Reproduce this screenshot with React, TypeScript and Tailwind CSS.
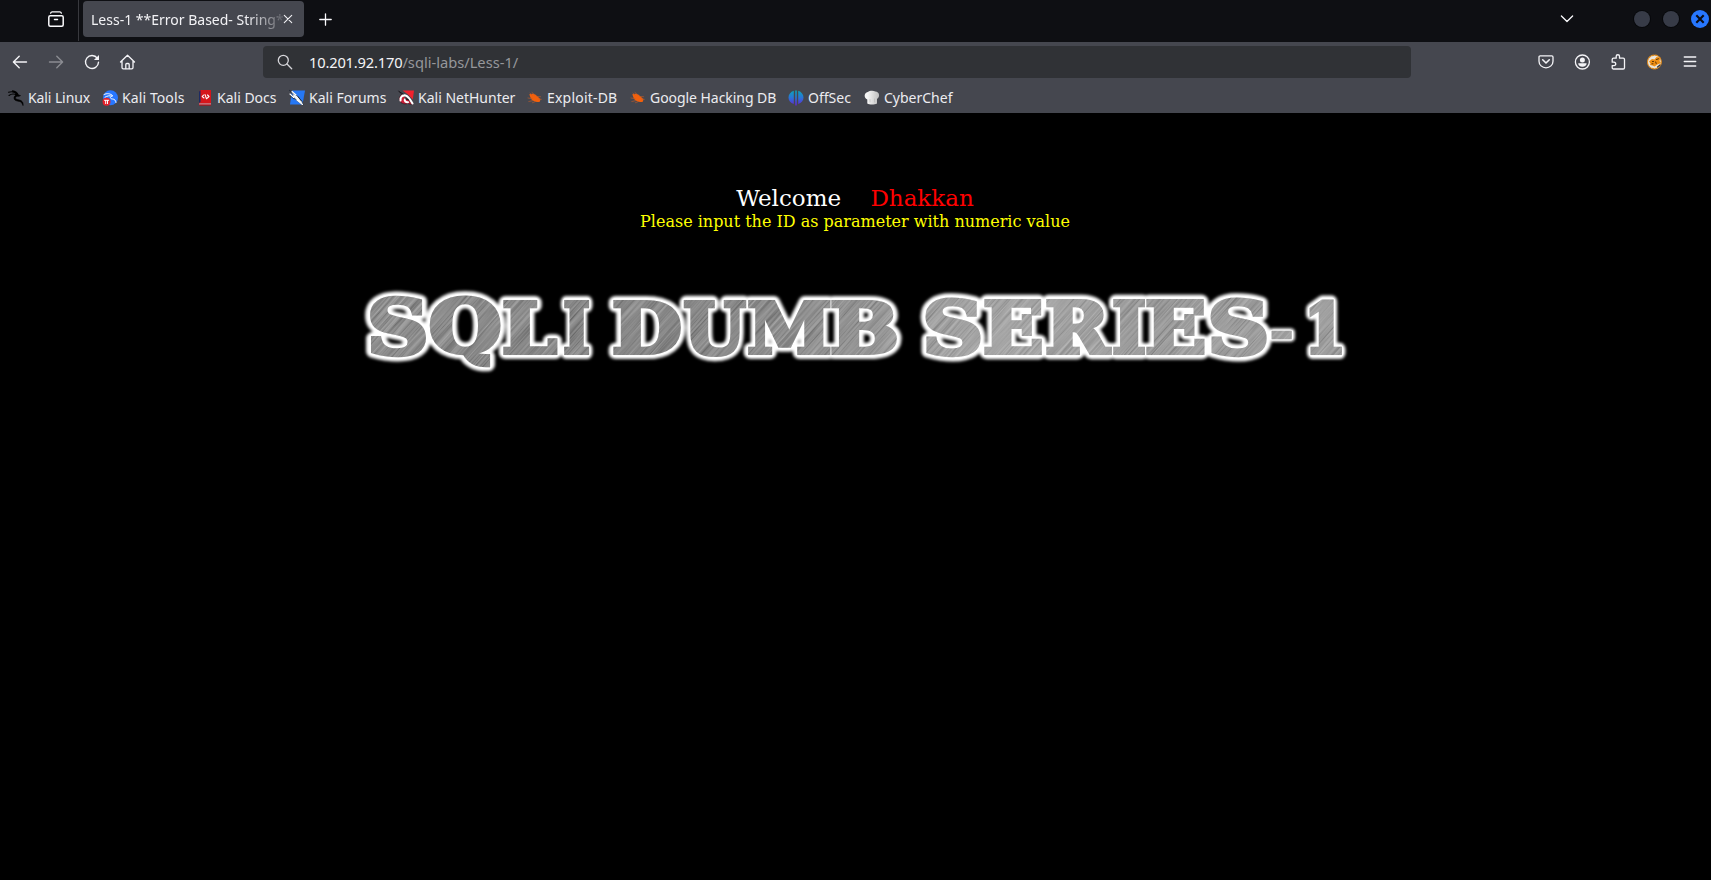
import React from "react";

type IconProps = { children: React.ReactNode; className?: string };

function Icon({ children, className = "" }: IconProps) {
  return (
    <svg
      viewBox="0 0 16 16"
      className={`size-4 shrink-0 overflow-visible ${className}`}
      fill="none"
      stroke="currentColor"
      strokeWidth={1.3}
      strokeLinecap="round"
      strokeLinejoin="round"
    >
      {children}
    </svg>
  );
}

function ToolButton({ children, className = "" }: IconProps) {
  return <button className={`flex size-9 items-center justify-center ${className}`}>{children}</button>;
}

function DragonIcon() {
  return (
    <Icon className="text-black">
      <path d="M.5 2.2C4 1.2 7.500 2.200 9.500 4.800M1 5.500C3.500 3.600 6.500 3.800 9 5.200M4.500 .8C7 1.200 9 2.500 10 4.500" strokeWidth={1.1} />
      <path d="M9 4.500L12.500 5.600L11 6.300C8 6 6.500 7.600 8 9C9.500 10 13 9.500 14.500 12C15.200 13.400 15.200 14.500 15 15.600C14.500 13.500 13.500 12 11.500 11.500C8.500 10.900 6 10.500 6 8C6 6.300 7.500 5.200 9 4.500Z" fill="currentColor" strokeWidth={0.6} />
    </Icon>
  );
}

function ToolsIcon() {
  return (
    <Icon>
      <circle cx="8.5" cy="7.700" r="7.500" fill="#2777ff" stroke="none" />
      <path d="M2 4.500C5 3 8.500 3.500 10.500 5.500M3 7.200C5.500 5.500 8 5.500 10 6.200M10 6C7.500 6.500 8 9 10.500 9C12.500 9 13.800 10.500 14 12.500" stroke="#fff" strokeWidth={1} />
      <circle cx="4.500" cy="11.700" r="4" fill="#e3222b" stroke="none" />
      <path d="M2.500 10.300H6.700M3.700 10.500V13.600M5.500 10.500V13.600" stroke="#fff" strokeWidth={1} />
    </Icon>
  );
}

function DocsIcon() {
  return (
    <Icon>
      <path d="M2 1.500L3.500 0H14V15H2Z" fill="#d5151b" stroke="none" />
      <path d="M2 1.500L3.500 .3V12L2 13Z" fill="#1c2c63" stroke="none" />
      <path d="M2.200 13.500H14V14.700H2.200Z" fill="#b9c1cf" stroke="none" />
      <path d="M2.200 14.500H14V15.600H2.200Z" fill="#b70d13" stroke="none" />
      <path d="M6.500 5.200L5.200 6.600L7 8M10.500 5L12 6.500L10.300 8.200M8 4.600L9.500 8.700" stroke="#fff" strokeWidth={1.1} />
    </Icon>
  );
}

function ForumsIcon() {
  return (
    <Icon>
      <path d="M3 .5H16L13.500 14.500H1Z" fill="#2678f5" stroke="none" />
      <path d="M.7 .6L4 4.500L3.600 6.500L8.500 11L14 15L13 11.500L8.500 6L6.500 4.800Z" fill="#f4f6f8" stroke="#16202e" strokeWidth={0.7} />
      <path d="M1 4L4.500 7.500M3 1.500L7 5M8 10L13.500 14.500" stroke="#fff" strokeWidth={1.1} />
      <path d="M1.500 6L5 9M9 6.800L12.500 11" stroke="#101820" strokeWidth={0.7} />
    </Icon>
  );
}

function NetHunterIcon() {
  return (
    <Icon>
      <path d="M4.500 .5H16L14.800 9.500L10 4.500Z" fill="#f0222e" stroke="none" />
      <path d="M.7 1L4 4.500C1.500 6 .8 8.500 1.500 10.500C3 13.500 6 14.500 9.500 13.500L14.500 14.500L11 10L8 8.500" fill="#c91f38" stroke="#22131a" strokeWidth={0.6} />
      <path d="M2.500 10.500C2 7 4.500 5 7.500 5.500C10.500 6.200 12 9 14.500 13.500M7 9C6 11 8 12.500 10 12.200" stroke="#fff" strokeWidth={2.100} />
      <path d="M1 1.500L5 4M7 8.600L10.500 10" stroke="#17191d" strokeWidth={1} />
    </Icon>
  );
}

function BugIcon() {
  return (
    <Icon className="text-[#f2600c]">
      <path d="M2.300 4.300C5 3 8 3.600 10 6L13.500 9.200L12.800 11.700C9 12.800 5.500 11 3.800 8.500Z" fill="currentColor" stroke="none" />
      <path d="M5 2.500L8 5M3 3.200L5 5M10 6.500L13.500 6.700M12 9L14.300 9.300M1 8L5 8.700M1.800 11.500L6 10.600M5.500 12.700L8.500 11.500" stroke="#b65a2c" strokeWidth={0.7} />
    </Icon>
  );
}

function OffSecIcon() {
  return (
    <Icon>
      <defs>
        <linearGradient id="offsec" x1="0" y1="0" x2="0" y2="1">
          <stop offset="0" stopColor="#0aa5b8" />
          <stop offset=".5" stopColor="#2b72d8" />
          <stop offset="1" stopColor="#6424d2" />
        </linearGradient>
      </defs>
      <path d="M5.800 .7V14C2.500 13 .5 10.500 .5 7.500S2.500 1.700 5.800 .7ZM7.200 .5H8.800V15.500H7.200ZM10.200 .7C13.500 1.700 15.500 4.500 15.500 7.500S13.500 13 10.200 14Z" fill="url(#offsec)" stroke="none" />
    </Icon>
  );
}

function ChefIcon() {
  return (
    <Icon>
      <defs>
        <linearGradient id="chef">
          <stop offset=".2" stopColor="#f4f4f4" />
          <stop offset="1" stopColor="#bdbdbd" />
        </linearGradient>
      </defs>
      <path d="M3.300 13.500V9.500C-.5 8 0 2.500 3.800 2C5.500 .5 9.500 .3 11.300 1.500C15.500 1.500 16.500 7 13 9V13.500C10.500 14.800 5.500 14.800 3.300 13.500Z" fill="url(#chef)" stroke="none" />
      <path d="M6 9.500V12M10.500 9V12" stroke="#b5b5b5" strokeWidth={0.6} />
    </Icon>
  );
}

const bookmarks: [string, () => React.ReactElement, string][] = [
  ["Kali Linux", DragonIcon, "w-[94px] tracking-[-0.1px]"],
  ["Kali Tools", ToolsIcon, "w-[95px] tracking-[0.1px]"],
  ["Kali Docs", DocsIcon, "w-[92px]"],
  ["Kali Forums", ForumsIcon, "w-[109px]"],
  ["Kali NetHunter", NetHunterIcon, "w-[129px]"],
  ["Exploit-DB", BugIcon, "w-[103px] tracking-[0.2px]"],
  ["Google Hacking DB", BugIcon, "w-[158px] tracking-[-0.05px]"],
  ["OffSec", OffSecIcon, "w-[76px]"],
  ["CyberChef", ChefIcon, "w-[90px]"],
];

function TabStrip() {
  return (
    <header className="flex h-[42px] items-start bg-[#0e0f13]">
      <div className="flex h-[41px] w-[79px] items-center justify-end border-r border-[#38393e] pr-[14px] text-[#fbfbfe]">
        <Icon className="-mt-[3px]">
          <rect x=".8" y="4.800" width="14.400" height="10.500" rx="1.500" strokeWidth={1.5} />
          <path d="M2.600 2.200C2.900 1.300 3.400 .9 4.200 .9H11.800C12.600 .9 13.100 1.300 13.400 2.200" strokeWidth={1.3} />
          <path d="M6.500 8.600H9.500" strokeWidth={1.5} />
        </Icon>
      </div>
      <div className="mt-px ml-1 flex h-9 w-[221px] items-center rounded bg-[#45474f] pl-2 text-sm text-[#f2f2f5]">
        <span className="w-[193px] pt-px whitespace-nowrap [mask-image:linear-gradient(to_right,black_155px,transparent_198px)]">
          Less-1 **Error Based- String*
        </span>
        <svg viewBox="0 0 8 8" className="size-2 shrink-0 overflow-visible" stroke="currentColor" strokeLinecap="round" strokeWidth={1.1}>
          <path d="M.3 .3L7.700 7.700M7.700 .3L.3 7.700" />
        </svg>
      </div>
      <svg viewBox="0 0 12 12" className="mt-[13px] ml-[15px] size-3 overflow-visible" stroke="#fbfbfe" strokeLinecap="round" strokeWidth={1.3}>
        <path d="M6.500 .8V12.200M.8 6.500H12.200" />
      </svg>
      <div className="ml-auto flex h-[38px] items-center pr-[2px]">
        <svg viewBox="0 0 12 8" className="mr-[61px] h-2 w-3 overflow-visible" fill="none" stroke="#fbfbfe" strokeLinecap="round" strokeLinejoin="round" strokeWidth={1.3}>
          <path d="M.4 1L6 6.500L11.600 1" />
        </svg>
        <span className="mr-[13px] size-4 rounded-full bg-[#373b47] ring-1 ring-[#07080b]" />
        <span className="mr-3 size-4 rounded-full bg-[#373b47] ring-1 ring-[#07080b]" />
        <span className="flex size-[18px] items-center justify-center rounded-full bg-[#2777ff]">
          <svg viewBox="0 0 8 8" className="size-2 overflow-visible" stroke="#0b0d14" strokeWidth={2.100}>
            <path d="M.3 .3L7.700 7.700M7.700 .3L.3 7.700" />
          </svg>
        </span>
      </div>
    </header>
  );
}

function NavBar() {
  return (
    <nav className="flex h-10 items-center bg-[#45474f] text-[#f4f4f7]">
      <div className="flex w-[263px] pl-[2px]">
        <ToolButton>
          <Icon><path d="M14.500 8H1.500M7.200 2.200L1.400 8L7.200 13.800" strokeWidth={1.4} /></Icon>
        </ToolButton>
        <ToolButton className="text-[#8b8c92]">
          <Icon><path d="M1.500 8H14.500M8.800 2.200L14.600 8L8.800 13.800" strokeWidth={1.4} /></Icon>
        </ToolButton>
        <ToolButton>
          <Icon>
            <path d="M13.300 4.200A6.500 6.500 0 1 0 14.500 8.200" strokeWidth={1.4} />
            <path d="M15 .9V6H9.900Z" fill="currentColor" stroke="none" />
          </Icon>
        </ToolButton>
        <ToolButton>
          <Icon>
            <path d="M.5 8L7.500 1.200L14.500 8M2 6.800V13.500C2 14.300 2.500 14.800 3.300 14.800H11.700C12.500 14.800 13 14.300 13 13.500V6.800" />
            <path d="M5.800 14.500V10.500C5.800 9.900 6.200 9.500 6.800 9.500H8.200C8.800 9.500 9.200 9.900 9.200 10.500V14.500" />
          </Icon>
        </ToolButton>
      </div>
      <div className="flex h-8 w-[1148px] items-center rounded bg-[#303236] pl-[14px]">
        <Icon className="text-[#d6d6da]">
          <circle cx="6.300" cy="6.300" r="5" />
          <path d="M10 10L14.700 14.700" />
        </Icon>
        <span className="ml-4 text-[14.67px] whitespace-pre">
          <span className="tracking-[-0.17px]">10.201.92.170</span>
          <span className="text-[#96979b]">/sqli-labs/Less-1/</span>
        </span>
      </div>
      <div className="ml-auto flex pr-[3px]">
        <ToolButton>
          <Icon>
            <path d="M2.200 1.900H13.800C14.500 1.900 15 2.400 15 3.100V7.200A7 6.600 0 0 1 1 7.200V3.100C1 2.400 1.500 1.900 2.200 1.900Z" />
            <path d="M4.700 5.800L8 9L11.300 5.800" strokeWidth={1.6} />
          </Icon>
        </ToolButton>
        <ToolButton>
          <Icon>
            <circle cx="8.400" cy="8" r="7" />
            <circle cx="8.400" cy="5.900" r="2.500" fill="currentColor" stroke="none" />
            <path d="M4.200 9.300H12.600C12.600 11.500 10.900 12.800 8.400 12.800S4.200 11.500 4.200 9.300Z" fill="currentColor" stroke="none" />
          </Icon>
        </ToolButton>
        <ToolButton>
          <Icon>
            <path d="M2.200 8.200V5.500C2.200 4.700 2.700 4.200 3.500 4.200H6.200V2.300C6.200 .2 9.500 .2 9.500 2.300V4.200H13.200C14 4.200 14.500 4.700 14.500 5.500V13.700C14.500 14.500 14 15 13.200 15H3.500C2.700 15 2.200 14.500 2.200 13.700V11.700H4C6.300 11.700 6.300 8.200 4 8.200Z" />
          </Icon>
        </ToolButton>
        <ToolButton>
          <Icon>
            <circle cx="8.400" cy="8" r="6.900" fill="#e9e4da" stroke="#e08a1a" strokeDasharray="2.500 1.200" strokeWidth={1.1} />
            <path d="M3 7.500L6 5L8.500 5.500L10.500 3L14.500 3.500L13.500 7L15 9L11.500 10.500L8.500 12.500L6.500 11.500L4 11L4.500 9.500Z" fill="#ef8f14" stroke="none" />
            <path d="M6.500 7.500H7.500M10.500 5.500L12.500 4.800M9.700 8L10.200 9.500M6 9.800H7" stroke="#5c3407" strokeWidth={1} />
            <path d="M11.500 13L14 11" stroke="#30343e" strokeWidth={1.2} />
          </Icon>
        </ToolButton>
        <ToolButton>
          <Icon><path d="M2.300 3H13.700M2.300 7.500H13.700M2.300 12H13.700" strokeWidth={1.4} /></Icon>
        </ToolButton>
      </div>
    </nav>
  );
}

// Glyph metrics are for a 100px face: [left, right, ascent, descent].
const metrics: Record<string, [number, number, number, number]> = {
  S: [5.5, 67, 74.2, 1.4],
  Q: [4, 83, 74.2, 18],
  L: [4, 69, 73, 0],
  I: [4, 43, 73, 0],
  D: [4, 83, 73, 0],
  U: [3, 86, 73, 1.4],
  M: [4, 106, 73, 0],
  B: [4, 79, 73, 0],
  E: [4, 72, 73, 0],
  R: [4, 84, 73, 0],
  "-": [5, 37, 34, -20],
  "1": [12, 60, 74, 0],
};

// Letter, left, right, top and bottom on the banner.
const banner: [string, number, number, number, number][] = [
  ["S", 14.5, 76, 12.5, 73],
  ["Q", 75, 150, 12.5, 83.5],
  ["L", 148, 208, 16, 71.3],
  ["I", 208.3, 240, 16, 71.3],
  ["D", 258, 331, 16, 71.3],
  ["U", 328.500, 397, 16, 73],
  ["M", 393, 480.3, 16, 71.3],
  ["B", 476, 543.5, 16, 71.3],
  ["S", 570, 630.700, 13, 73],
  ["E", 629, 692.4, 16, 71.6],
  ["R", 691, 762.2, 16, 71.6],
  ["I", 757.7, 795.6, 16, 71.6],
  ["E", 791, 855, 16, 71.6],
  ["S", 855, 917, 13, 73],
  ["-", 915.7, 942.7, 45.7, 56.3],
  ["1", 954, 992.5, 16, 71.6],
].map(([ch, x0, x1, y0, y1], i) => {
  const right = [71.3, 145.5, 203, 235, 326, 392, 475.3, 541.5, 626, 687.4, 757.2, 790.6, 850, 912, 937.7, 987.5][i];
  return [ch as string, x0 as number, Math.min(x1 as number, right), y0 as number, y1 as number];
});

function Banner() {
  const grow = 2.2;
  return (
    <svg viewBox="0 0 1001 96" className="mt-[50px] h-24 w-[1001px]" role="img">
      <defs>
        <g id="letters" fontFamily="DejaVu Serif" fontWeight="bold" fontSize="100">
          {banner.map(([ch, x0, x1, y0, y1], i) => {
            const [l, r, a, d] = metrics[ch];
            const sx = (x1 - x0 - 2 * grow) / (r - l);
            const sy = (y1 - y0 - 2 * grow) / (a + d);
            return (
              <text key={i} transform={`matrix(${sx} 0 0 ${sy} ${x0 + grow - l * sx} ${y0 + grow + a * sy})`}>
                {ch}
              </text>
            );
          })}
        </g>
        <filter id="glow" x="-5%" y="-40%" width="110%" height="180%">
          <feGaussianBlur stdDeviation="1.7" />
        </filter>
        <filter id="brushed" x="0" y="0" width="100%" height="100%" colorInterpolationFilters="sRGB">
          <feTurbulence type="fractalNoise" baseFrequency="0.012 0.6" numOctaves={3} seed={4} />
          <feColorMatrix values="1.100 0 0 0 0  1.100 0 0 0 0  1.100 0 0 0 0  0 0 0 0 1" />
        </filter>
        <linearGradient id="steel">
          <stop offset="0" stopColor="#8a8a8a" />
          <stop offset=".3" stopColor="#838383" />
          <stop offset=".5" stopColor="#909090" />
          <stop offset=".65" stopColor="#a4a4a4" />
          <stop offset=".8" stopColor="#979797" />
          <stop offset="1" stopColor="#9e9e9e" />
        </linearGradient>
        <mask id="face" maskUnits="userSpaceOnUse" x="0" y="0" width="1001" height="96">
          <use href="#letters" fill="#fff" stroke="#fff" strokeWidth={6} strokeLinejoin="miter" />
        </mask>
      </defs>
      <use href="#letters" fill="#fff" stroke="#fff" strokeWidth={17.5} strokeLinejoin="round" filter="url(#glow)" />
      <use href="#letters" fill="#fff" stroke="#fff" strokeWidth={10.5} strokeLinejoin="round" />
      <g mask="url(#face)">
        <rect width="1001" height="96" fill="url(#steel)" />
        <g className="opacity-70 mix-blend-soft-light">
          <g transform="rotate(-48 500 48)">
            <rect x="-50" y="-450" width="1100" height="1000" filter="url(#brushed)" />
          </g>
        </g>
      </g>
    </svg>
  );
}

export default function App() {
  return (
    <div className="flex h-[880px] w-[1711px] flex-col overflow-hidden bg-black font-['Noto_Sans',sans-serif]">
      <TabStrip />
      <NavBar />
      <div className="flex h-[31px] items-center bg-[#45474f] pt-px pl-2 text-sm text-[#ececf0]">
        {bookmarks.map(([label, Glyph, size]) => (
          <a key={label} className={`flex shrink-0 items-center gap-1 whitespace-nowrap ${size}`}>
            <Glyph />
            {label}
          </a>
        ))}
      </div>
      <main className="flex flex-col items-center pt-[72px] pr-px font-['DejaVu_Serif',serif]">
        <h1 className="h-[27px] text-[23px] leading-[27px] whitespace-pre text-white">
          Welcome{"    "}<span className="text-[#ff0000]">Dhakkan</span>
        </h1>
        <p className="h-[22px] text-base leading-5 text-[#ffff00]">Please input the ID as parameter with numeric value</p>
        <Banner />
      </main>
    </div>
  );
}
